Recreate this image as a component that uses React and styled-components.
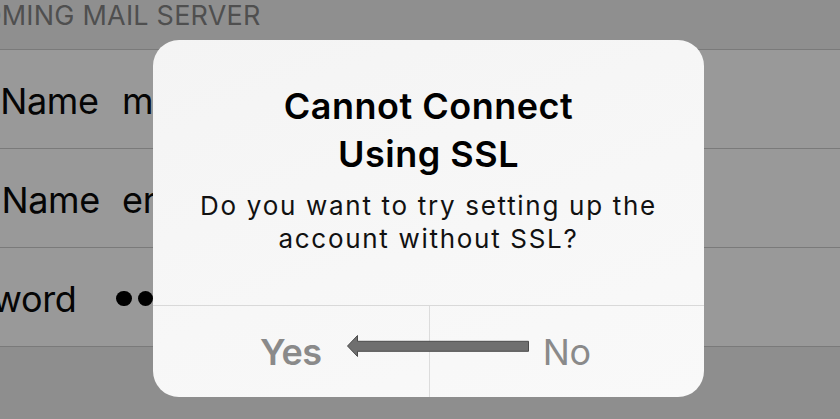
import React from "react";
import styled, { createGlobalStyle } from "styled-components";

const GlobalStyle = createGlobalStyle`
  html, body {
    margin: 0;
    padding: 0;
    background: #8e8e8e;
    overflow: hidden;
  }
  body {
    font-family: Inter, "Noto Sans", "Liberation Sans", sans-serif;
  }
`;

const Page = styled.div`
  position: relative;
  width: 840px;
  height: 419px;
  overflow: hidden;
  background: #8e8e8e;
`;

const Screen = styled.div`
  margin-left: -87px;
  width: 927px;
  display: flex;
  flex-direction: column;
`;

const SectionHeader = styled.div`
  height: 49px;
  box-sizing: border-box;
  padding: 2px 0 0 20px;
  background: #8f8f8f;
  color: #4f4f4f;
  font-size: 27px;
  line-height: 28px;
  letter-spacing: 0.2px;
  white-space: nowrap;
`;

const List = styled.div`
  display: flex;
  flex-direction: column;
  background: #999999;
  border-top: 1px solid #7a7a7a;
`;

const Row = styled.div`
  height: 99px;
  box-sizing: border-box;
  padding-top: 3px;
  display: flex;
  align-items: center;
  border-bottom: 1px solid #7a7a7a;
  color: #050505;
  font-size: 36px;
  white-space: nowrap;
`;

const Label = styled.span`
  flex: 0 0 209px;
  letter-spacing: -0.4px;
`;

const Value = styled.span`
  flex: 1;
  letter-spacing: -0.3px;
`;

const Dots = styled.span`
  display: flex;
  gap: 6px;
  margin-left: -6px;
`;

const Dot = styled.span`
  width: 15.5px;
  height: 15.5px;
  border-radius: 50%;
  background: #000;
`;

const Alert = styled.div`
  position: absolute;
  left: 153px;
  top: 40px;
  width: 551px;
  height: 357px;
  border-radius: 26px;
  background: linear-gradient(160deg, #f4f4f4 0%, #f7f7f7 55%, #f9f9f9 100%);
  display: flex;
  flex-direction: column;
  overflow: hidden;
`;

const Body = styled.div`
  flex: 0 0 266px;
  box-sizing: border-box;
  padding: 42px 24px 0;
  display: flex;
  flex-direction: column;
  align-items: center;
  text-align: center;
  border-bottom: 1px solid #d9d9d9;
`;

const Title = styled.div`
  font-size: 36px;
  font-weight: 600;
  line-height: 48px;
  letter-spacing: 0.5px;
  color: #000;
`;

const Message = styled.div`
  margin-top: 11px;
  font-size: 26px;
  line-height: 33px;
  letter-spacing: 1.7px;
  color: #111;
`;

const Actions = styled.div`
  position: relative;
  flex: 1;
  display: grid;
  grid-template-columns: 1fr 1fr;
`;

const ActionButton = styled.button`
  border: none;
  background: transparent;
  font-family: inherit;
  font-size: 36px;
  font-weight: ${(p) => (p.$primary ? 600 : 400)};
  letter-spacing: ${(p) => (p.$primary ? "-0.6px" : "-0.3px")};
  color: #8a8a8a;
  padding: 0;
  display: flex;
  align-items: center;
  justify-content: center;
  border-left: ${(p) => (p.$divider ? "1px solid #dcdcdc" : "none")};
`;

const ArrowLayer = styled.div`
  position: absolute;
  left: 0;
  top: 0;
  right: 0;
  bottom: 0;
  display: flex;
  align-items: center;
  pointer-events: none;
`;

const ArrowBox = styled.div`
  position: relative;
  width: 100%;
  height: 24px;
  margin-top: -2px;
`;

const ArrowMark = styled.svg`
  position: absolute;
  left: 193px;
  top: -5px;
  width: 184px;
  height: 24px;
`;

export default function App() {
  return (
    <>
      <GlobalStyle />
      <Page>
        <Screen>
          <SectionHeader>INCOMING MAIL SERVER</SectionHeader>
          <List>
            <Row>
              <Label>Host Name</Label>
              <Value>mail.example.com</Value>
            </Row>
            <Row>
              <Label>User Name</Label>
              <Value>erin@example.com</Value>
            </Row>
            <Row>
              <Label>Password</Label>
              <Dots>
                {Array.from({ length: 8 }).map((_, i) => (
                  <Dot key={i} />
                ))}
              </Dots>
            </Row>
          </List>
        </Screen>
        <Alert>
          <Body>
            <Title>
              Cannot Connect
              <br />
              Using SSL
            </Title>
            <Message>Do you want to try setting up the account without SSL?</Message>
          </Body>
          <Actions>
            <ActionButton $primary>Yes</ActionButton>
            <ActionButton $divider>No</ActionButton>
            <ArrowLayer>
              <ArrowBox>
                <ArrowMark viewBox="0 0 184 24">
                  <path
                    d="M1.5 12 L11.5 1.5 L11.5 7.3 L182.5 7.3 L182.5 17.3 L11.5 17.3 L11.5 22.5 Z"
                    fill="#6f6f6f"
                    stroke="#4b4b4b"
                    strokeWidth="1"
                    strokeLinejoin="miter"
                  />
                </ArrowMark>
              </ArrowBox>
            </ArrowLayer>
          </Actions>
        </Alert>
      </Page>
    </>
  );
}
